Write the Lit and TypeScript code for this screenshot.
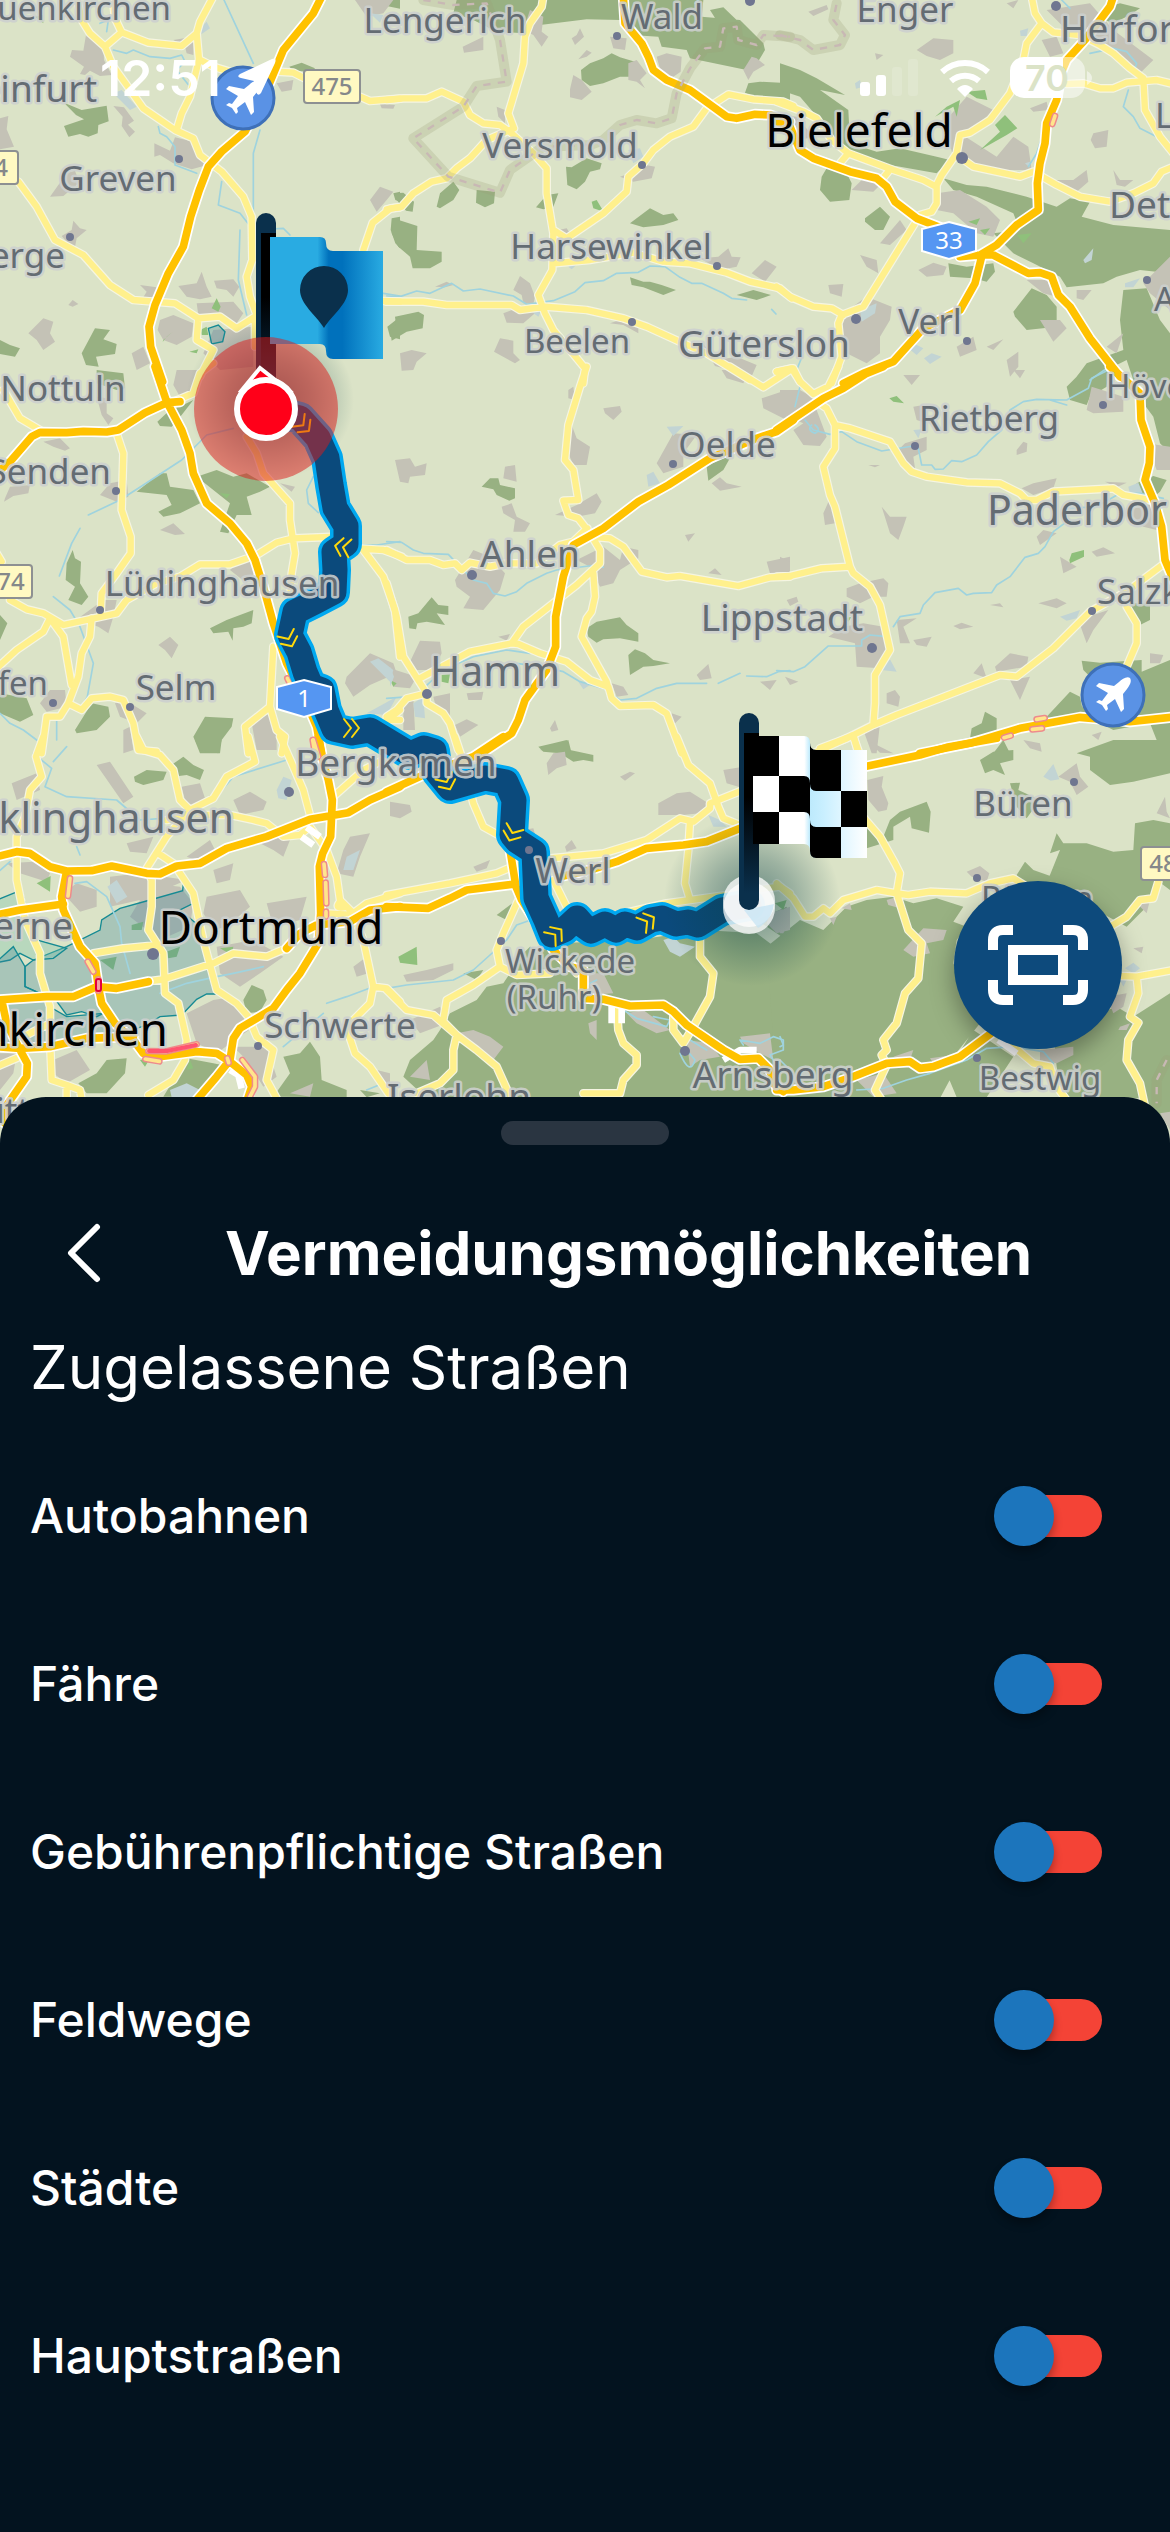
import { LitElement, css, html, svg } from "lit";
import { customElement, property, state } from "lit/decorators.js";

/* ---------- map data ----------
   The map is cut into a 3 x 3 grid of tiles, each 390 x 370 map units.
   Geometry inside a tile is stored at three times that resolution. */

interface Tile {
  x: number;
  y: number;
  wood?: string;
  park?: string;
  town?: string;
  lake?: string;
  river?: string;
  road?: string;
  motorway?: string;
  border?: string;
  jam?: string;
  blank?: string;
}

const TILES: Tile[] = [
  {
    x: 0,
    y: 0,
    wood: "M192 378L252 358L228 345L192 308L245 330L320 317L326 364L295 375L293 400L265 410L240 402L205 410ZM868 200L905 188L945 205L935 215L880 212ZM245 1060L285 985L330 990L310 1018L350 1032L345 1062L288 1070L296 1100L258 1095ZM0 1020L30 1035L60 1045L45 1070L0 1062ZM1140 0H1200V26L1160 18ZM1180 580L1200 575V605L1186 600ZM1175 655L1200 650V745L1186 730L1172 690ZM1162 980L1200 950V1018L1170 1010ZM885 820L900 800L905 830Z",
    park: "M105 50L128 45L130 70ZM635 925L650 895L662 920L655 935ZM600 990L620 980L625 1005L605 1005ZM568 1055L595 1048L590 1060ZM490 1020L518 995L500 1010L488 1026Z",
    town: "M258 105L310 120L312 180L335 225L300 228L270 212L255 225L240 222L252 200L210 170L216 150L250 152ZM340 318L372 322L402 362L384 374L405 395L388 412L365 378L368 350ZM525 412L580 425L600 462L622 495L575 508L520 490L480 465L463 470L463 430L510 452ZM0 355L25 348L20 388L42 440L0 448ZM150 590L200 520L225 512L238 548L190 588ZM185 708L215 690L220 662L240 685L260 690L230 715L225 740L200 725ZM420 855L470 862L470 895L430 892L440 875ZM535 858L590 850L605 815L620 860L635 890L600 898L560 890ZM642 842L700 838L718 860L700 890L680 870L650 865ZM480 960L520 945L580 970L575 1010L530 1035L490 1020L473 990ZM590 910L700 905L730 940L700 985L640 950L595 945ZM395 1060L430 1040L450 1090L410 1110ZM85 1000L130 955L160 965L150 1000L165 1025L130 1050L110 1020ZM205 915L218 900L235 912L218 920ZM1110 600L1140 560L1180 575L1160 600L1130 635ZM1065 0L1180 0L1150 40L1100 50ZM830 250L880 240L875 270L845 275ZM1140 312L1185 315L1180 326L1145 325ZM520 120L580 110L580 165L560 160L555 140ZM640 990L760 980L760 1100L660 1110L610 1060Z",
    lake: "M340 280L365 270L410 320L390 330ZM600 85L620 65L630 85L605 102ZM1110 40L1150 45L1140 68Z",
    river: "M300 70L325 60L320 95M340 150L380 160L400 150L450 170L510 175L545 165L555 185L530 210L570 260M475 380L480 400L500 410L525 440L525 495L590 520M665 545L655 615L720 640L740 665L760 690L850 685L870 705M672 0L760 190M780 390L760 460V640M720 690L715 840L740 945M1150 880L1200 888",
    road: "M230 -10L245 60L270 100L315 140L340 200L380 255L430 325L525 390L580 415L600 465L665 515L730 590L755 650L757 780L740 830L750 890L770 945M315 140L365 97L345 55L340 10M365 97L445 128L545 138L590 100L600 65L640 -10M590 100L597 178L640 200L740 230M597 178L570 290L545 340L530 390M830 215L880 218L920 238M1080 290L1110 303L1200 296M55 545L110 620L165 720L250 765L330 855L400 900L525 910L595 955L660 950L710 985L765 950V1040M595 955L590 1020L640 1050L600 1130M1090 750L1118 668L1172 625L1200 622M1150 903L1200 905",
    motorway: "M965 -10L940 40L850 150L800 270L735 395L665 455L625 500L598 570L572 650L550 740L505 820L465 915L447 980L452 1040L488 1145",
  },
  {
    x: 390,
    y: 0,
    wood: "M200 0H450L455 75L400 100L320 95L250 60L190 40ZM458 0H940L935 50L1050 60L1120 130L1125 150L1095 200L1070 210L900 175L890 150L815 140L805 110L725 105L690 60L590 58L450 75ZM573 210L600 190L640 175L665 160L690 172L735 185L725 230L690 230L640 250L600 258L575 240ZM1075 250L1110 245L1200 250V310L1120 305L1065 278ZM528 500L545 502L590 475L635 490L630 508L600 515L585 545L560 568L532 555ZM720 670L780 625L820 645L850 640L865 660L820 675L760 682ZM10 655L82 678L80 750L155 755L155 785L120 805L68 805L60 770L25 740L5 700ZM140 620L150 580L190 545L208 570L190 600L150 625ZM260 570L315 575L312 610L285 622L258 608ZM12 580L40 578L72 605L68 635L48 632L20 600ZM438 622L470 585L505 580L490 620L460 628ZM720 832L760 845L780 845L815 855L858 870L820 885L760 862L725 855ZM1040 885L1090 870L1143 885L1100 900ZM15 950L85 935L102 945L98 985L50 995L5 1022L0 990L18 975ZM960 30L1000 22L1040 60L1030 80L985 70Z",
    park: "M605 605L620 600L632 620L642 635L610 625Z",
    town: "M420 30L460 50L455 95L475 110L455 140L430 105L400 90ZM218 140L280 110L280 150L222 158ZM545 115L560 105L570 85L582 110L555 135ZM565 178L590 150L605 158L590 170ZM540 268L550 225L575 240L605 275L575 300L540 292ZM715 190L740 180L770 220L750 240L765 265L740 245L715 240ZM800 170L830 160L875 170L872 215L850 230L815 225ZM660 110L710 115L705 150L670 145ZM1060 210L1085 170L1100 175L1125 195L1090 215L1075 240ZM320 320L345 330L345 370L325 350ZM690 530L720 520L740 490L795 500L785 535L730 545ZM505 690L530 685L540 700L515 715ZM930 775L985 770L1015 745L1025 770L1052 772L1040 800L990 810ZM1085 820L1125 780L1160 800L1125 845ZM370 870L390 828L420 850L435 890L430 912L400 910L395 885ZM340 940L380 925L440 935L400 970L350 968ZM312 1055L330 1015L370 1022L370 1060L390 1080L375 1090ZM30 1060L65 1050L110 1060L80 1085L70 1110L35 1112ZM135 860L170 845L190 855L165 862ZM660 970L720 950L745 965L745 1000L700 975ZM930 1020L980 1080L1040 1070L1100 1095L1080 1140L1020 1110L975 1098Z",
    lake: "M715 450L750 445L760 470L730 490ZM535 800L570 785L545 808ZM425 935L455 930L445 950Z",
    river: "M-10 888L30 890L80 873L120 880L185 850L220 873L270 867L370 888L410 913L490 902L555 875L585 848L640 842L680 820L745 817L780 798L825 800L870 832L905 850L935 850L1000 880L1025 895L1070 900M1145 928L1158 942M925 0L915 10",
    border: "M100 0L190 15L290 10L330 120L350 245L260 258L220 320L70 415L175 530L330 578L360 510L460 440L600 435L640 420L690 375L740 360L800 370L845 355L860 280L900 205L945 145L990 140L1000 85L1040 80L1045 120L1100 135L1120 105L1200 110",
    road: "M-10 300L40 295L110 295L155 275L220 305L240 345L280 370L330 375L365 400L430 460L470 505L470 580L490 700L487 810L445 885L465 940L490 990L540 1050L585 1105L580 1150M460 -10L455 20L420 70L405 110L400 190L355 340L372 385L290 420L240 475L200 505L170 535L125 545L70 580L35 620L-10 628M490 690L530 715L640 640L710 575L715 530L760 490L790 450L840 410L910 380L950 325L1015 283L1090 298L1180 305L1210 318M490 790L600 780L730 758L820 785L900 790L1010 818L1080 845L1170 865L1205 895M-10 905L100 905L170 915L365 915L390 930L465 920L590 930L700 955L770 980L880 1030L950 1060L1080 1140",
    motorway: "M700 -10L705 70L755 130L775 170L790 210L830 240L900 270L1010 350L1040 355L1095 343L1140 345L1200 365",
  },
  {
    x: 780,
    y: 0,
    wood: "M0 190L60 210L110 235L195 285L120 270L205 330L210 430L290 455L360 445L470 470L510 480L470 520L360 500L240 480L190 450L120 360L60 290L0 270ZM490 535L560 555L620 560L740 590L830 620L870 595L930 605L905 650L1000 675L1170 690V820L1080 810L1010 830L970 850L860 862L840 830L760 790L700 760L640 700L720 690L700 640L590 590L520 570ZM125 530L140 505L200 520L215 550L208 600L150 605L120 570ZM255 655L300 620L330 650L310 690L285 690L255 665ZM700 935L755 865L800 885L830 920L830 980L740 990L705 950ZM505 790L560 800L640 790L645 815L620 845L580 835L510 830ZM1030 870L1100 865L1140 960L1170 1000V1140H1060L1040 1080L920 1140L890 1130L920 1090L1030 1050L1020 960ZM985 20L1020 10L1080 25L1050 45L1000 70L975 60Z",
    park: "M645 375L675 345L712 385L680 405L600 450L660 395ZM465 350L500 320L540 300L530 350L520 320ZM560 275L615 270L622 300L590 295ZM565 665L600 655L590 675ZM712 705L755 700L730 730ZM600 690L630 685L615 705Z",
    town: "M85 35L140 15L145 28L100 48ZM285 160L310 165L290 180ZM410 150L460 115L520 120L520 160L480 180L440 168ZM680 10L715 0L700 25ZM800 30L930 10L1000 90L1120 180L1080 220L1000 150L900 100L850 80ZM785 120L830 110L850 160L810 170ZM480 380L560 290L640 330L600 370L540 400L650 470L700 410L745 440L755 510L640 510L550 490L520 470L500 400ZM470 580L540 570L620 620L660 660L640 710L590 700L520 640L470 630ZM770 490L800 540L880 540L920 510L925 545L885 580L800 550ZM940 400L985 390L980 440L945 445L932 420ZM1000 510L1020 540L1060 540L1035 560L1010 555ZM240 765L290 780L295 820L260 800ZM415 810L460 788L500 800L490 825L440 830ZM145 855L190 852L185 890L150 880ZM190 940L260 890L335 920L330 960L300 1010L300 1060L260 1090L200 1060L180 990ZM530 1040L580 1010L590 1050L540 1070ZM620 1040L670 1018L640 1050ZM680 1080L715 1055L715 1100L690 1130ZM780 960L840 960L860 985L820 1025ZM215 570L270 515L310 545L280 575ZM300 730L360 660L380 690L330 735ZM740 840L800 840L830 890L790 880ZM890 870L935 870L910 900L890 895ZM1090 850L1170 770V930L1110 880ZM0 345L50 350L100 410L60 420L0 400ZM980 1040L1030 1000L1010 1060ZM750 325L800 305L805 330L760 335Z",
    lake: "M720 92L745 85L740 108L722 108ZM225 250L240 240L245 262L228 266ZM240 930L290 910L285 940L245 965ZM385 1045L400 1030L430 1045L410 1065ZM432 1075L455 1060L485 1070L450 1092ZM1035 850L1080 835L1060 862L1035 862ZM910 780L940 745L935 780L915 790ZM735 490L750 485L748 502Z",
    river: "M845 0L870 25M930 160L1000 145L1040 155L1070 190L1060 220M1045 270L1030 320L1060 350L1080 385L1130 410L1170 460M800 370L770 460L745 500M60 990L70 1060L50 1110M930 1140L980 1105",
    border: "M0 105L60 120L100 150L180 135L195 105L160 60L170 10",
    road: "M-10 305L70 335L110 355L155 420L205 460L340 510L430 540L468 560M205 460L180 490M325 515L305 540M755 -10L765 40L785 70L740 130L730 180L690 280L630 360L570 398L540 405L530 460L485 525L470 555L470 610L455 635L420 645L250 920L185 945L175 970L185 1070L155 1150M785 70L820 97L900 105L960 135L1000 160L1050 205L1090 235L1095 330L1140 410L1180 460M860 252L910 250L960 265L1000 265L1040 248L1130 240L1180 252M545 475L580 500L720 530L760 515L830 555L900 590L990 605L1060 580L1120 550L1145 515L1180 500M-10 860L30 890L100 920L155 925L190 945M-10 1115L35 1105L60 1145",
    motorway: "M-10 365L30 380L60 450L100 475L210 515L290 535L320 560L345 605L410 655L500 690M540 770L600 765L650 735L710 675L775 630L772 550L780 490L795 430L800 370L830 300L845 215L860 180L915 120L990 20L1000 -10M600 765L640 765L745 820L780 818L815 830L835 885L870 920L930 1015L1020 1130M605 770L585 850L540 930L430 985L340 1085L250 1120L190 1150",
    jam: "M825 348L817 372",
  },
  {
    x: 0,
    y: 370,
    wood: "M290 0L370 10L375 55L350 60L290 40ZM410 365L480 310L500 310L510 350L580 360L600 400L540 430L490 440L475 425L515 405L500 375ZM590 320L650 300L700 320L740 310L810 350L780 365L740 380L755 435L710 435L685 490L660 485L690 400ZM472 155L510 120L560 100L580 90L545 135L515 170L480 168ZM200 580L218 540L225 565L243 575L240 640L265 680L245 705L205 690L225 650L197 630ZM0 735L22 760L0 810ZM630 775L680 750L760 720L755 760L730 770L700 775L698 812L685 785L640 790ZM580 1100L615 1040L700 1045L695 1070L665 1110L660 1150H600ZM225 1080L275 1000L325 1010L330 1040L290 1080L230 1090ZM0 970L80 985L100 1035L60 1055L0 1030Z",
    park: "M660 370L690 372L680 385ZM1170 930L1190 940L1180 950Z",
    town: "M530 0L600 0L580 60L540 80L520 45ZM290 80L320 85L320 130L340 145L325 165L305 135ZM130 215L180 205L210 235L195 242L160 230ZM15 385L30 350L90 345L85 370L40 378L12 395ZM300 375L330 340L380 330L385 380L350 395ZM480 480L520 460L555 492L525 495ZM690 600L740 550L770 600L740 640ZM475 825L510 800L535 825L515 865L495 840ZM235 745L310 690L350 690L340 740L325 790L295 770L235 750ZM120 1000L150 960L195 960L200 1010L140 1025ZM345 1000L375 990L440 1030L410 1060L360 1040ZM840 340L885 350L875 365ZM1040 920L1110 850L1180 880L1190 910L1110 945L1060 980L1035 940ZM1190 285H1200V310ZM755 1060L810 1030L830 1090L830 1140H770ZM370 1080L390 1070L400 1140L370 1150Z",
    lake: "M1110 875L1135 865L1180 900L1170 935ZM1100 1030L1190 980L1160 1035Z",
    river: "M265 435L360 390L430 345L545 270L620 195L700 175M240 475L215 520L178 618M160 680L210 720L240 770L280 880L262 980L240 1020M940 320L920 360L925 400L955 428M1080 525L1130 525L1200 515M0 1030L30 1060L70 1080L110 1110M170 1030V1110",
    road: "M350 190L370 250L365 420L392 500L392 550L350 610L305 670L302 730M10 60L60 145L125 183M520 95L580 70L600 10L640 -20M30 690L80 718L130 730L190 765L350 730L380 690L470 640L540 620L600 583L690 583L770 555L830 518L880 505L1010 500M150 745L130 785L50 840L-10 895M150 745L190 800L215 945M-10 550L5 575M275 745L270 800L245 850L235 920L205 1000L180 1040L140 1040L125 1150M205 1000L245 1020L275 985L330 980L370 990L400 1060L415 1140L470 1145M740 200L770 250L790 310L870 400L870 450L885 550L875 610L870 700M820 830L810 1010L735 1070L745 1150M810 1010L830 1080L855 1100L845 1150M1090 540L1150 620L1185 720L1200 860M1075 535L1150 540L1205 560M1150 1060L1200 1020",
    motorway: "M465 -10L500 95L545 180L570 250L580 310L620 400L690 460L740 520L765 570L790 650L820 760L860 880L920 1000L950 1070L965 1150M-10 310L30 275L95 200L120 187L200 188L250 184L320 186L355 180L435 128L500 98L540 95",
    jam: "M862 925L872 945M938 1110L945 1150",
  },
  {
    x: 390,
    y: 370,
    wood: "M275 350L300 325L325 325L330 345L375 355L375 385L358 392L320 375L310 358ZM55 740L85 730L125 682L145 705L175 708L175 735L140 730L165 765L110 755L82 760L78 778L58 775ZM590 775L620 755L690 742L710 765L745 790L745 815L690 805L640 808L620 818L595 800ZM715 855L735 838L765 850L790 870L840 880L790 888L760 890L720 915ZM950 290L1000 262L1018 268L1000 300L955 332ZM450 1140L480 1130L535 1110L545 1150Z",
    park: "M155 915L180 912L175 940L155 935Z",
    town: "M15 270L60 265L75 290L110 280L105 315L60 320L55 340L30 335ZM345 290L375 285L380 335L340 325ZM335 410L365 400L380 440L420 460L405 485L370 485L375 450L340 430ZM640 115L690 108L695 125L670 150L645 130ZM545 165L560 205L600 230L590 285L550 285L535 250ZM535 60L550 50L555 90L535 85ZM800 280L850 190L920 195L880 250L880 290L820 310ZM965 340L990 322L1010 340L1055 350L990 362ZM495 435L560 405L620 370L635 395L615 430L560 440ZM195 630L250 540L300 560L345 610L330 660L280 720L220 715L240 680L200 650ZM560 570L640 530L690 570L700 530L745 540V565L690 600L670 640L630 650L600 590ZM885 495L915 490L895 515ZM1115 85L1190 60V150L1160 135L1120 115ZM1130 575L1200 560V610H1140ZM955 610L975 595L995 615ZM60 875L90 812L150 815L155 850L130 900L80 900ZM0 895L80 920L60 955L10 950ZM920 915L955 882L965 925L930 930ZM1110 935L1160 930L1140 960ZM130 980L180 970L180 1040L140 1020ZM195 1065L230 1048L265 1065L210 1100ZM230 970L280 965L275 990L235 990ZM665 940L700 950L715 975L680 980ZM480 1075L495 1050L505 1080L485 1085ZM995 0L1080 0L1060 40L1010 25ZM325 800L360 792L350 812ZM845 1030L875 1040L850 1065ZM40 1000L70 985L75 1080H40Z",
    lake: "M770 315L790 305L810 340L775 350ZM830 170L880 168L850 198ZM70 1000L100 980L105 1045L75 1040ZM565 935L600 945L580 958ZM0 890L12 920L0 950Z",
    river: "M-10 515L35 517L70 540L100 550L175 553L215 595L250 630L290 640L310 670L345 678L380 665L410 640L470 610L500 600L620 585L640 592M100 955L160 900L250 860L350 840L420 850M380 880L450 890L520 905L570 935L640 955L690 990L740 985L800 955L860 940L950 940M985 940L1050 910M1070 918L1130 920L1165 905L1200 902M-10 985L60 980",
    road: "M-10 540L50 570L120 570L160 585L195 580L215 600L240 578L300 590L350 580L440 580L510 525L550 515L592 475M590 -10L570 50L535 165L525 270L550 300L565 390L520 392L535 435L565 445L600 490L630 540L630 580L560 645L400 770L365 820L240 845L90 925M365 820L385 822L450 850L530 875L600 930L655 950L665 985L690 1008L790 1005L830 1030L875 1150M605 500L660 505L700 530L755 605L830 622L870 618L1045 648L1140 622L1200 620M610 610L615 680L605 725L590 745L575 800L650 935L655 955M1020 -10L1120 52L1200 0M-10 640L20 740L40 860L110 970L110 1000L160 1030L180 1060L205 1140M110 970L50 985L20 1020L-10 1040M-10 1050H30",
    motorway: "M260 1160L365 1090L385 1050L405 990L470 900L497 830L497 740L520 620L550 525L640 475L745 395L835 345L960 265L1100 205L1160 185L1210 150",
  },
  {
    x: 780,
    y: 370,
    wood: "M860 50L910 0L985 0L980 50L930 80L920 105L870 90ZM1090 100L1110 70L1100 0H1170V250L1140 220L1120 140ZM1070 340L1120 318L1160 330L1140 365L1110 390L1070 365ZM905 872L960 878L1085 870L1085 905L1170 870V1110H1130L1110 1060L1000 1080L900 1030L940 930L910 900ZM800 1040L870 965L900 980L910 1030L800 1060ZM570 1105L575 1075L605 1060L615 1025L650 1045L650 1080L600 1100ZM640 1150L670 1110L690 1150ZM1040 700L1110 700L1110 750L1080 765Z",
    park: "M328 85L350 78L372 100L340 95ZM868 570L875 550L912 540L912 560L870 580ZM195 745L215 740L205 755Z",
    town: "M0 60L60 60L95 80L140 200L120 228L70 225L40 180L70 160L0 130ZM370 15L420 15L395 45ZM375 220L440 200L440 240L400 260L405 295L380 280L355 240ZM400 110L430 105L440 160L410 150ZM710 240L730 215L742 220L740 245L710 255ZM920 120L935 50L1030 80L1030 125L940 130ZM725 355L760 340L830 325L820 355L760 375ZM305 410L330 440L380 440L370 470L355 510L330 490ZM130 430L150 385L165 460L135 465ZM770 500L790 480L830 490L780 525ZM935 545L970 532L1005 550L950 560ZM840 560L890 590L850 610ZM0 560L30 575V605H0ZM20 690L50 680L55 695L30 708ZM200 655L240 640L310 625L325 640L320 680L280 680L240 700L200 680ZM145 800L190 770L250 760L310 770L330 820L300 895L230 890L225 820ZM350 750L410 745L370 770L390 820H360ZM400 810L455 800L440 830L410 825ZM520 768L545 758L580 770L540 778ZM630 705L660 700L670 712ZM775 700L830 685L860 700L830 715ZM645 890L690 850L745 860L740 890L650 905ZM690 930L750 920L735 955L720 990ZM580 910L605 880L620 925ZM320 970L345 960L360 980L355 1010L320 1000ZM895 750L985 720L940 780L920 820ZM1110 850L1150 855L1140 880L1110 880ZM15 920L55 935L30 945ZM250 1080L300 1060L290 1150H275ZM935 1095L965 1085L955 1110ZM700 0H735L720 25ZM1100 220L1170 230V300H1130ZM1040 420L1130 400V480L1090 470ZM265 285L300 285L285 292ZM975 335L1040 338L1010 352Z",
    lake: "M1045 350L1075 338L1090 375L1050 372ZM840 740L900 720L890 745L860 752ZM305 900L330 868L350 905ZM400 180L425 178L415 205Z",
    river: "M60 50L45 110M75 150L100 180L150 193L185 185L230 215L305 243L400 228L415 235L425 285L455 285L465 298L490 297L515 272L545 275L590 255L625 215L665 180L690 120L730 95L770 88L860 90L925 55L935 25L985 0M810 90L860 105M95 165Q80 180 105 190Q125 180 105 165M860 455L820 485L795 530L775 550L735 562L690 620L650 645L635 668L580 670L560 675L535 655L465 668L430 705L420 730L360 740L340 770M320 800L270 795L245 810L245 828L145 828L75 890L40 905L-10 902M870 415L950 410L1020 370L1080 370L1150 385",
    road: "M-10 5L40 -5L60 35L100 72L145 50L175 -10M110 95L140 115L165 165L165 235L130 290L150 375L165 410L210 590L220 610L270 650L300 705L330 840L285 915L285 1000L280 1065M165 165L210 175L330 215L370 280L395 305L440 320L560 337L660 340L720 370L740 390L770 390L820 365L1000 355L1030 375L1110 390M-10 620L30 618L125 595L210 590M100 1150L220 1095L280 1065L350 1035L480 985L660 915L710 920L820 835L930 725L1040 665L1160 575M1040 710L1070 760L1070 820L1040 890M220 1095L235 1150",
    motorway: "M420 1150L570 1120L720 1075L900 1042L1050 1055L1190 1040M-10 180L130 85L190 55L260 10L310 -10M990 -10L1080 70L1083 150L1110 230L1108 280L1095 330L1125 400L1145 470L1155 570L1185 640",
    jam: "M672 1103L692 1097M757 1078L786 1075M770 1048L794 1044",
  },
  {
    x: 0,
    y: 740,
    wood: "M402 110L440 90L500 95L490 120L430 135L405 125ZM500 85L550 50L580 75L612 90L600 120L560 105L520 110ZM585 0H665L655 40L600 30ZM235 1030L290 1000L320 960L380 955L375 1000L320 1060L260 1060ZM490 1070L560 955L640 970L690 980L590 1070ZM580 870L640 840L655 855L640 890L590 880ZM730 780L755 735L790 750L800 780L780 815L740 820ZM820 1070L870 1000L850 950L900 940L930 905L960 950L965 1020L1040 1050L1040 1072ZM1080 1050L1140 1060L1100 1072Z",
    park: "M110 430L152 408L150 455ZM395 555L430 545L425 570L395 570ZM500 635L540 620L530 650L505 655ZM660 625L700 620L695 645ZM420 960L450 955L435 980ZM300 660L350 650L340 690ZM570 960L580 985L560 990Z",
    town: "M35 130L110 100L120 150L50 180ZM290 75L330 65L400 170L370 190ZM545 140L600 130L620 190L560 200ZM700 180L750 155L800 185L790 210L720 225ZM20 370L100 365L150 400L140 425L60 400ZM190 460L230 430L290 450L290 500L240 515ZM380 310L460 290L440 340L390 335ZM560 350L630 300L650 340L600 365ZM780 310L830 280L870 300L850 350L820 330ZM640 390L700 370L690 420L650 430ZM620 470L720 450L750 500L680 560L640 570L610 520ZM450 430L540 440L580 490L570 560L480 600L390 530ZM560 820L640 780L700 770L760 860L650 940L590 910ZM650 620L760 600L850 650L780 700L720 740L660 700ZM160 960L230 930L270 990L200 1030L160 1000ZM1030 330L1050 290L1110 280L1080 350L1060 410L1010 400ZM1060 680L1100 650L1105 700L1070 710ZM1130 990L1170 1000V1060L1140 1040ZM870 1060L940 1030L930 1070ZM330 410L420 400L560 420L420 480L330 500ZM0 940H50L40 1000L0 1050ZM800 490L920 470L900 540L820 560ZM700 920L800 920L830 1010L790 1040L740 960Z",
    lake: "M322 440L350 420L382 470L350 490ZM830 150L850 110L875 120L860 180L835 175ZM1040 350L1080 330L1060 390L1030 390ZM510 1050L560 1030L600 1050L580 1072H515Z",
    river: "M100 40L155 85L135 140L200 170L350 180L420 240L560 230L640 180M160 65L200 20M225 430L260 425L320 470L360 560L365 610L390 700M480 760L560 730L650 710L700 700L790 680M230 320L240 345M850 920L970 820M980 790L1040 770L1120 740M-10 400L30 365M80 265L70 220M1100 1050L1150 1030M640 180L700 110L860 60",
    road: "M130 -10L108 50L125 110L90 150L75 230L50 290L50 420L75 540L120 640L120 700L150 800L150 900L155 1020L200 1035L240 1050L245 1080M410 -10L430 30L480 45L520 90L540 180L570 210L640 175L680 110L765 65L745 -10M570 210L500 290L440 385L455 420L455 500L445 570L490 640L495 760L535 790L560 900L555 960L520 1020L445 1065M475 340L520 370L580 460L610 600L650 750L710 790L745 830L770 890L820 930L800 1020L830 1075M280 640L370 625L475 615M440 725L490 718L640 670L700 640L800 650L870 620M500 240L600 225L690 225L760 240L800 250L850 290L900 285L930 260M840 -10L880 80L910 150L930 225M1000 170L1090 90L1150 60M930 260L980 330L1010 410L1020 480L1060 520L1100 490L1200 460M1020 485Q1000 510 1040 500M980 520L1060 525L1090 600L1120 740L1110 790L1050 850L1045 880L1065 940L1110 980L1165 1060M1120 740L1160 745L1200 785M-10 980L60 950L70 890L150 850M200 1035V1070",
    motorway: "M955 -10L968 60L985 120L997 180L992 290L968 340L958 380L962 520L955 610L900 700L860 750L820 805L720 865L700 895L690 960L650 1010L590 1080M-10 350L50 335L90 340L150 380L200 393L275 392L335 378L440 400L480 402L530 378L600 370L680 325L800 290L930 238L1045 218L1110 180L1200 140M-10 525L60 510L190 492M200 393L185 470L190 510L240 620L285 670L295 740L305 790L345 850L400 900L430 940L480 950L590 935L650 940L690 965L740 1005L755 1040L740 1085M-10 780L140 770L220 770L290 740L350 745L445 725M5 780L20 850L60 930L82 970L80 1010L10 1110M-10 920L60 925L150 920L260 895L400 890M860 625L900 580L950 555L1050 545L1110 510L1200 500M15 1120V1150",
    jam: "M210 415L204 468M263 665L280 695M295 718V752M436 957L478 964M727 960L765 1010V1040L750 1070M972 372L975 405M977 428L979 490M978 515V530M940 0L955 50M682 955L686 968M445 933L500 934L590 913",
    blank: "M905 290L940 315M920 262L960 290M690 990L715 1005L725 1045",
  },
  {
    x: 390,
    y: 740,
    wood: "M445 20L490 10L530 0L540 30L610 45L610 65L580 60L550 65L510 40L460 35ZM320 525L380 480L385 510L350 540ZM150 870L130 900L60 960L40 1010L110 1075L600 1072L1180 1075V640L1100 580L940 570L740 600L500 610L530 640L420 620L400 640L340 730L290 740L260 780L180 820ZM220 700L280 690L260 720ZM1100 540L1190 500V600Z",
    park: "M25 650L80 620L82 675L30 668ZM1155 490L1190 480L1180 510Z",
    town: "M470 70L490 40L525 35L530 75L500 85L475 105ZM690 110L720 95L735 100L705 122ZM805 190L860 160L900 155L955 190L930 220L880 225L805 225ZM400 270L430 265L440 300L410 300ZM525 320L545 300L560 325L530 335ZM250 380L300 360L290 385L260 395ZM0 185L60 195L65 215L30 235L0 228ZM40 705L110 690L190 670L190 690L130 720L50 725ZM590 700L640 700L670 760L600 765ZM200 880L250 870L300 890L340 920L310 960L270 940L240 920ZM60 840L150 800L170 850L90 880ZM710 820L760 810L840 870L800 880L740 850ZM890 900L960 910L990 950L930 960L900 980ZM1140 520L1200 500V570L1160 580L1130 550ZM1050 890L1140 880L1150 960L1110 940L1060 910ZM60 1010L110 960L120 1020ZM595 850L620 840L620 900L600 880ZM1000 90L1060 80V145L1010 130Z",
    lake: "M820 600L850 590L870 610L915 620L870 650L840 635ZM955 225L990 240L1010 260H970Z",
    river: "M-10 745L50 735L190 720L250 690L300 645L350 600L380 555L450 530M700 810L740 835L830 860L840 840L790 830M870 940Q900 1010 915 960L890 930M900 900L950 930M1060 915L1050 900L1110 910L1150 890L1180 900V930L1140 945L1170 990M580 740L620 720",
    road: "M-10 465L180 430L320 400L380 375M480 355L640 340L770 300L870 235L910 245L960 205L960 190L1060 150M195 -10L215 50L250 190L280 260L325 285M860 -10L895 75L960 130L985 200L1000 235L1055 257M900 245L895 330L885 430L900 480M700 520L830 490L1010 465M490 420L530 500M385 480L340 580L320 630L330 680L250 735L170 780L160 840M330 680L380 705L480 700M-10 750L50 810L130 825L200 885L190 930L190 990L150 1030L80 1060M160 845L200 885L260 930L320 980L365 1080M930 590L930 650L970 700L960 770L910 860L880 910L850 870L850 830M680 790L685 870L700 910L740 945L740 975L700 1020L690 1060H580M1090 450L1170 440L1200 460M540 660L560 700",
    motorway: "M-10 155L100 105L250 50L340 -10M-10 500L115 505L180 475L230 450L375 432M360 330L378 440L395 480L490 630L540 680L580 690V775L640 778L720 798L820 795L850 815L890 855L1000 930L1050 958L1105 955L1140 990L1150 1030L1180 1055M510 410L600 390L680 365L770 325L880 315L950 305L1050 265",
    blank: "M665 785V850M695 790V850M1000 960L1050 930L1100 930",
  },
  {
    x: 780,
    y: 740,
    wood: "M-40 620L60 540L130 570L200 500L260 480L340 470L400 490L470 475L550 500L520 545L560 560L530 600L520 670L360 710L330 650L335 595L390 560L430 590L520 1000L480 1075H-60L-20 900ZM355 690L430 690L520 670L600 850L520 950L480 930L420 960L330 950L320 860ZM330 240L360 215L440 185L452 215L447 278L395 265L390 230L340 260L340 300L260 325V260L310 290ZM600 60L640 35L700 30L700 60L660 70L675 105L640 90L615 100ZM690 130L720 128L715 150L780 180L740 235L710 200ZM890 40L1000 0H1170V100L1060 125L990 135L930 90L930 50ZM710 405L735 365L760 390L830 415L800 445L730 430ZM810 340L830 280L850 310L920 310L1000 335L1060 330L1065 250L1120 240L1170 250V450L1130 420L1100 500L1040 560L800 430L840 330ZM580 870L700 950L620 1072H530L500 1000ZM820 870L1010 800L1060 830L1170 760V1150L1080 1075L850 1072L830 980Z",
    town: "M262 120L310 108L305 140L325 190L320 210L295 215L265 180ZM560 395L600 378L628 400L620 425L575 410ZM835 110L890 70L900 110L925 140L890 165L870 125ZM370 630L430 565L500 570L490 600L440 610L450 640L400 650ZM320 480L370 465L360 505L325 495ZM185 505L210 490L215 510ZM1130 220L1155 170L1160 215L1170 235ZM1070 490L1110 480L1100 520ZM980 770L1040 760L1030 800L1000 820ZM1020 860L1050 850L1040 870L1015 870ZM780 930L880 920L880 945L830 970L780 960ZM230 1020L310 1000L350 1060L280 1070ZM340 950L400 930L390 960ZM1140 1120L1170 1115V1170ZM0 530L30 540L10 580H0ZM730 0L780 10L785 35L750 25ZM260 0L340 40L300 38ZM150 535L170 530L160 555ZM450 955L560 940L540 970L470 985ZM1060 625L1090 620L1085 640Z",
    lake: "M790 110L820 72L838 118L812 122ZM1035 685L1060 668L1080 685L1060 700ZM1020 720L1040 720L1030 740Z",
    river: "M0 960L30 990M230 1050L310 1045L380 1020L450 1000L560 960L620 925L700 920L790 935L820 970M0 890L10 915L0 920",
    border: "M1160 960L1130 1020L1130 1090",
    road: "M-10 430L40 475L75 530L100 530L130 505L150 520L190 480L290 450L350 460L385 465L450 455L560 460L630 430L700 415L740 440M240 220L300 290L345 370L360 400L350 460L385 570L425 610L415 715L375 760L350 850L310 900L320 930L305 945L320 975L285 1050L305 1080M1135 425L1120 475L1080 480L1040 530L990 560M1020 708L1070 710L1180 690M1070 710L1075 760L1050 830L1075 848L1045 900L1040 960L1080 1030L1095 1100M690 910L760 970L810 980L830 1040L860 1080M120 25L200 -5M220 -10L238 40",
    motorway: "M-10 1050L40 1050L130 1040L220 1010L320 970L390 965L420 985L460 980L540 950L660 860L760 780M230 85L420 45L500 22L650 -5",
    blank: "M655 900L710 940",
  },
];

interface Label {
  text: string;
  x: number;
  y: number;
  size: number;
  anchor?: "start" | "middle" | "end";
  city?: boolean;
}

const LABELS: Label[] = [
  { text: "euenkirchen", x: 171, y: 20, size: 33, anchor: "end" },
  { text: "Lengerich", x: 445, y: 33, size: 35 },
  { text: "Wald", x: 662, y: 29, size: 35 },
  { text: "Enger", x: 905, y: 22, size: 35 },
  { text: "Herfor", x: 1060, y: 42, size: 37, anchor: "start" },
  { text: "einfurt", x: 97, y: 102, size: 37, anchor: "end" },
  { text: "L", x: 1155, y: 128, size: 35, anchor: "start" },
  { text: "Versmold", x: 560, y: 158, size: 35 },
  { text: "Greven", x: 118, y: 191, size: 35 },
  { text: "Det", x: 1109, y: 218, size: 37, anchor: "start" },
  { text: "Harsewinkel", x: 611, y: 259, size: 35 },
  { text: "erge", x: 65, y: 268, size: 35, anchor: "end" },
  { text: "A", x: 1154, y: 311, size: 33, anchor: "start" },
  { text: "Beelen", x: 577, y: 353, size: 33 },
  { text: "Gütersloh", x: 764, y: 357, size: 37 },
  { text: "Verl", x: 930, y: 334, size: 35 },
  { text: "Nottuln", x: 63, y: 401, size: 35 },
  { text: "Höve", x: 1106, y: 398, size: 33, anchor: "start" },
  { text: "Rietberg", x: 989, y: 431, size: 35 },
  { text: "Oelde", x: 727, y: 457, size: 35 },
  { text: "Senden", x: 111, y: 484, size: 35, anchor: "end" },
  { text: "Paderbor", x: 987, y: 525, size: 41, anchor: "start" },
  { text: "Ahlen", x: 530, y: 567, size: 37 },
  { text: "Lüdinghausen", x: 222, y: 596, size: 35 },
  { text: "Salzk", x: 1097, y: 604, size: 35, anchor: "start" },
  { text: "Lippstadt", x: 782, y: 631, size: 37 },
  { text: "Hamm", x: 495, y: 686, size: 41 },
  { text: "fen", x: 48, y: 695, size: 33, anchor: "end" },
  { text: "Selm", x: 176, y: 700, size: 35 },
  { text: "Bergkamen", x: 396, y: 776, size: 37 },
  { text: "Büren", x: 1023, y: 816, size: 35 },
  { text: "klinghausen", x: 234, y: 833, size: 41, anchor: "end" },
  { text: "Werl", x: 573, y: 883, size: 35 },
  { text: "Rüthen", x: 1037, y: 910, size: 33 },
  { text: "erne", x: 73, y: 939, size: 37, anchor: "end" },
  { text: "Wickede", x: 570, y: 973, size: 33 },
  { text: "(Ruhr)", x: 554, y: 1009, size: 33 },
  { text: "Schwerte", x: 340, y: 1038, size: 35 },
  { text: "Arnsberg", x: 773, y: 1088, size: 37 },
  { text: "Bestwig", x: 1040, y: 1090, size: 33 },
  { text: "Iserlohn", x: 459, y: 1110, size: 37 },
  { text: "itt", x: 30, y: 1123, size: 35, anchor: "end" },
  { text: "Bielefeld", x: 859, y: 147, size: 46, city: true },
  { text: "Dortmund", x: 271, y: 944, size: 46, city: true },
  { text: "nkirchen", x: 168, y: 1046, size: 46, anchor: "end", city: true },
];

/* x, y, radius */
const DOTS: number[][] = [
  [179, 159, 4], [70, 237, 4], [617, 36, 4], [642, 165, 4], [717, 266, 4], [632, 322, 4],
  [962, 158, 6], [856, 319, 5], [967, 341, 4], [1056, 6, 5], [1147, 280, 4], [750, 1, 5],
  [116, 491, 4], [100, 610, 4], [53, 703, 4], [130, 707, 4], [289, 792, 5], [673, 464, 4],
  [472, 575, 5], [427, 694, 5], [915, 446, 4], [1103, 405, 4], [1092, 611, 4], [872, 648, 5],
  [153, 954, 6], [258, 1046, 4], [1074, 782, 4], [977, 878, 4], [977, 1058, 4], [529, 850, 4],
  [501, 941, 4], [685, 1051, 5],
];

/* x, y, heading in degrees */
const ARROWS: number[][] = [
  [304, 426, 45], [342, 547, 190], [289, 640, 65], [352, 728, 0],
  [447, 783, 65], [512, 834, 112], [556, 934, -40], [648, 921, -32],
];

const ROUTE =
  "M265 409L300 418L318 438L327 458L331 485L335 508L346 526L346 544L334 552L335 570L334 592L315 602L295 612L290 635L299 652L305 672L311 686L322 690L326 710L334 729L352 733L370 730L390 742L410 754L424 748L434 751L437 772L450 788L485 778L506 782L514 800L512 835L517 841L534 852L536 898L546 920L552 935L564 930L577 918L584 926L591 931L605 924L616 930L625 924L637 928L651 920L662 918L676 924L688 922L698 925L722 910L749 905";

const at = (t: Tile) => `translate(${t.x} ${t.y}) scale(0.33333)`;

const layer = (key: keyof Tile, cls: string) =>
  TILES.filter((t) => t[key]).map(
    (t) => svg`<path class=${cls} transform=${at(t)} d=${String(t[key])}></path>`,
  );

const plane = (x: number, y: number) => svg`
  <g transform="translate(${x} ${y})">
    <circle r="31" fill="#5a92e5" stroke="#3e70b8" stroke-width="3"></circle>
    <path fill="#fff" d="M17 -17C14 -19 9 -16 6 -13L1 -9L-14 -12L-17 -9L-5 -2L-11 6L-14 5L-17 7L-11 10L-7 16L-5 14L-6 10L2 4L8 17L11 14L10 -1L14 -6C17 -10 19 -14 17 -17Z"></path>
  </g>`;

const shield = (x: number, y: number, width: number, text: string, textX: number) => svg`
  <g>
    <rect x=${x} y=${y} width=${width} height="33" rx="3" fill="#fff9c2" stroke="#8d9092" stroke-width="2"></rect>
    <text class="shield-text" x=${textX} y=${y + 25} text-anchor="middle">${text}</text>
  </g>`;

const hexagon = (x: number, y: number, text: string) => svg`
  <g transform="translate(${x} ${y})">
    <path d="M0 -18L27 -11V11L0 19L-27 11V-11Z" fill="#5596f2" stroke="#fff" stroke-width="2"></path>
    <text class="hexagon-text" y="9" text-anchor="middle">${text}</text>
  </g>`;

@customElement("route-map")
export class RouteMap extends LitElement {
  static styles = css`
    :host {
      display: block;
    }
    .map {
      display: block;
      width: 100%;
      height: auto;
      background: #dbe3c7;
      font-family: "Noto Sans", "Open Sans", sans-serif;
    }
    .wood {
      fill: #98b182;
    }
    .park {
      fill: #8fc07b;
    }
    .town {
      fill: #c4c2b6;
    }
    .lake {
      fill: #c2d4d4;
    }
    .line {
      fill: none;
      stroke-linejoin: round;
      stroke-linecap: round;
    }
    .river {
      stroke: #9fd3de;
      stroke-width: 5px;
    }
    .road-edge {
      stroke: #f5f5e2;
      stroke-width: 26px;
    }
    .road {
      stroke: #fff08c;
      stroke-width: 19px;
    }
    .motorway-edge {
      stroke: #fff;
      stroke-width: 33px;
    }
    .motorway {
      stroke: #ffc200;
      stroke-width: 23px;
    }
    .border-edge {
      stroke: #9da078;
      stroke-opacity: 0.25;
      stroke-width: 30px;
    }
    .border {
      stroke: #c8b8b4;
      stroke-width: 7px;
      stroke-dasharray: 22 22;
      stroke-linecap: butt;
    }
    .jam-edge {
      stroke: #ee8a8c;
      stroke-width: 20px;
    }
    .jam {
      stroke: #ffe58c;
      stroke-width: 11px;
    }
    .blank {
      stroke: #fff;
      stroke-width: 20px;
      stroke-linecap: butt;
    }
    .zone {
      fill: #3f8797;
      fill-opacity: 0.32;
      stroke: #158a93;
      stroke-width: 4px;
    }
    .zone-green {
      fill: #6fc0a8;
    }
    .label {
      fill: #646c73;
      stroke: #cdd0cf;
      stroke-opacity: 0.9;
      stroke-width: 5px;
      stroke-linejoin: round;
      paint-order: stroke;
    }
    .label-city {
      fill: #000;
    }
    .shield-text {
      fill: #85888a;
      font-size: 24px;
      font-weight: 500;
    }
    .hexagon-text {
      fill: #fff;
      font-size: 24px;
    }
  `;

  render() {
    return html`
      <svg class="map" viewBox="0 0 1170 1144" role="img" aria-label="Routenkarte">
        <defs>
          <linearGradient id="cloth" x1="0" x2="1">
            <stop offset="0" stop-color="#29abe2"></stop>
            <stop offset="0.42" stop-color="#29abe2"></stop>
            <stop offset="0.52" stop-color="#0071bc"></stop>
            <stop offset="0.64" stop-color="#0071bc"></stop>
            <stop offset="1" stop-color="#29abe2"></stop>
          </linearGradient>
          <linearGradient id="check" x1="0" x2="1">
            <stop offset="0" stop-color="#fff"></stop>
            <stop offset="0.45" stop-color="#fff"></stop>
            <stop offset="0.5" stop-color="#bdeafc"></stop>
            <stop offset="0.62" stop-color="#c9efff"></stop>
            <stop offset="1" stop-color="#fff"></stop>
          </linearGradient>
          <linearGradient id="pole" x1="0" x2="0" y1="0" y2="1">
            <stop offset="0" stop-color="#000"></stop>
            <stop offset="0.4" stop-color="#000"></stop>
            <stop offset="1" stop-color="#0a304c"></stop>
          </linearGradient>
          <radialGradient id="glow">
            <stop offset="0" stop-color="#0a4048" stop-opacity="0.55"></stop>
            <stop offset="0.5" stop-color="#0a4048" stop-opacity="0.3"></stop>
            <stop offset="1" stop-color="#0a4048" stop-opacity="0"></stop>
          </radialGradient>
        </defs>

        ${layer("wood", "wood")} ${layer("town", "town")} ${layer("park", "park")}
        ${layer("lake", "lake")}
        <g transform="translate(0 740) scale(0.33333)">
          <path
            class="zone"
            d="M550 430L580 460V490L540 510L600 560L625 640V690L650 740L645 762L620 762L590 778L545 825L480 830L440 855L370 880L310 820L290 830L245 815L200 825L160 770L120 760L75 740V680L100 660L200 620L300 570L305 540L360 505L450 480L548 452Z"
          ></path>
          <path class="zone zone-green" d="M-10 480L65 450L75 490V560L110 600L200 625L160 655L100 660L60 640L30 660L-10 668Z"></path>
          <path class="zone" d="M-10 665L40 620L75 680V740L120 760L140 795L200 830L310 820L360 880L200 920L-10 915Z"></path>
        </g>
        <path class="zone" transform="scale(0.33333)" d="M625 985L655 975L675 995L668 1025L635 1032Z"></path>
        ${layer("river", "line river")} ${layer("road", "line road-edge")}
        ${layer("road", "line road")} ${layer("blank", "line blank")}
        ${layer("motorway", "line motorway-edge")} ${layer("motorway", "line motorway")}
        ${layer("border", "line border-edge")} ${layer("border", "line border")}
        ${layer("jam", "line jam-edge")} ${layer("jam", "line jam")}
        <path class="line" d="M149 1051L167 1051L196 1045" stroke="#ff5470" stroke-width="4"></path>
        <rect x="96" y="979" width="5" height="12" rx="2" fill="#f5a0a0" stroke="#e4003c" stroke-width="2"></rect>

        <ellipse cx="270" cy="400" rx="84" ry="80" fill="url(#glow)"></ellipse>
        <path class="line" d=${ROUTE} stroke="#00a8f0" stroke-width="32"></path>
        <path class="line" d=${ROUTE} stroke="#0b4a7c" stroke-width="25"></path>
        ${ARROWS.map(
          ([x, y, turn]) => svg`
            <path class="line" transform="translate(${x} ${y}) rotate(${turn})" stroke="#ffd90a" stroke-width="2"
              d="M-8 -9L-1 0L-8 9M0 -9L7 0L0 9"></path>`,
        )}
        ${DOTS.map(([x, y, r]) => svg`<circle cx=${x} cy=${y} r=${r} fill="#6f7690"></circle>`)}
        ${shield(304, 70, 56, "475", 332)} ${shield(-20, 151, 38, "4", 1)}
        ${shield(-30, 565, 62, "74", 11)} ${shield(1141, 847, 60, "48", 1163)}
        ${hexagon(949, 240, "33")} ${hexagon(304, 698, "1")} ${plane(243, 98)}
        ${plane(1113, 695)}
        ${LABELS.map(
          (l) => svg`
            <text class="label ${l.city ? "label-city" : ""}" x=${l.x} y=${l.y} font-size=${l.size}
              text-anchor=${l.anchor ?? "middle"}>${l.text}</text>`,
        )}

        <g>
          <rect x="256" y="213" width="20" height="190" rx="10" fill="#0a304c"></rect>
          <rect x="261" y="233" width="15" height="160" fill="url(#pole)"></rect>
          <path
            d="M270 237H320Q326 237 326 243Q326 251 333 251H383V359H333Q326 359 326 351Q326 344 320 344H270Z"
            fill="url(#cloth)"
          ></path>
          <path d="M324 328C316 315 300 304 300 290A24 24 0 0 1 348 290C348 304 332 315 324 328Z" fill="#0a304c"></path>
          <circle cx="266" cy="409" r="72" fill="#de1a1a" fill-opacity="0.5"></circle>
          <path d="M260 368L242 390H288Z" fill="#ff0019" stroke="#fff" stroke-width="4"></path>
          <circle cx="266" cy="409" r="29" fill="#ff0019" stroke="#fff" stroke-width="6"></circle>
        </g>

        <g>
          <ellipse cx="752" cy="900" rx="88" ry="86" fill="url(#glow)"></ellipse>
          <circle cx="749" cy="901" r="26" fill="#fff" fill-opacity="0.75"></circle>
          <circle cx="749" cy="908" r="26" fill="#fff" fill-opacity="0.75"></circle>
          <path d="M744 910L758 928Q772 920 774 904Z" fill="#c3e2f3" fill-opacity="0.7"></path>
          <rect x="739" y="713" width="20" height="197" rx="10" fill="#0a304c"></rect>
          <rect x="744" y="733" width="15" height="160" fill="url(#pole)"></rect>
          <path d="M753 736H804Q810 736 810 743Q810 750 816 750H867V858H816Q810 858 810 851Q810 844 804 844H753Z" fill="url(#check)"></path>
          <path
            d="M753 736H779V776H753ZM779 776H804Q810 776 810 783V819Q810 812 804 812H779ZM753 812H779V844H753ZM810 743Q810 750 816 750H841V791H816Q810 791 810 784ZM841 791H867V827H841ZM810 820Q810 827 816 827H841V858H816Q810 858 810 851Z"
            fill="#000"
          ></path>
        </g>
      </svg>
    `;
  }
}

@customElement("status-bar")
export class StatusBar extends LitElement {
  static styles = css`
    :host {
      display: flex;
      justify-content: space-between;
      align-items: center;
      height: 60px;
      padding: 48px 76px 0 100px;
      color: #fff;
      font-family: Inter, "Liberation Sans", sans-serif;
      font-weight: 600;
    }
    .clock,
    .icons {
      display: flex;
      align-items: center;
    }
    .clock {
      gap: 16px;
      font-size: 50px;
      line-height: 60px;
    }
    .icons {
      gap: 20px;
    }
    .battery-text {
      fill: #dbe3c7;
      font-size: 36px;
    }
  `;

  render() {
    return html`
      <div class="clock">
        <time>12:51</time>
        <svg width="40" height="40" viewBox="0 0 40 40" aria-hidden="true">
          <path d="M35 1Q40 -1 38 5L24 35Q21 39 19 34L17 23L4 20Q-1 19 3 16Z" fill="#fff"></path>
        </svg>
      </div>
      <div class="icons">
        <svg width="60" height="40" viewBox="0 0 60 40" fill="#fff" aria-hidden="true">
          <rect x="0" y="24" width="10" height="14" rx="3"></rect>
          <rect x="16" y="17" width="10" height="21" rx="3"></rect>
          <g fill-opacity="0.15">
            <rect x="32" y="9" width="10" height="29" rx="3"></rect>
            <rect x="48" y="1" width="10" height="37" rx="3"></rect>
          </g>
        </svg>
        <svg width="50" height="40" viewBox="0 0 50 40" aria-hidden="true">
          <g fill="none" stroke="#fff" stroke-width="6">
            <path d="M2 14A34 34 0 0 1 48 14"></path>
            <path d="M11 23A21 21 0 0 1 39 23"></path>
          </g>
          <path d="M25 39L17 31Q25 23 33 31Z" fill="#fff"></path>
        </svg>
        <svg width="84" height="42" viewBox="0 0 84 42" aria-label="Akku 70 Prozent">
          <path d="M14 0H53V41H14A14 14 0 0 1 0 27V14A14 14 0 0 1 14 0Z" fill="#fff"></path>
          <path d="M53 0H61A14 14 0 0 1 75 14V27A14 14 0 0 1 61 41H53Z" fill="#fff" fill-opacity="0.5"></path>
          <path d="M77 14Q82 17 82 21Q82 25 77 28Z" fill="#fff" fill-opacity="0.5"></path>
          <text class="battery-text" x="37" y="34" text-anchor="middle">70</text>
        </svg>
      </div>
    `;
  }
}

@customElement("road-switch")
export class RoadSwitch extends LitElement {
  @property() label = "";
  @property({ type: Boolean }) checked = false;

  static styles = css`
    :host {
      display: flex;
      align-items: center;
      justify-content: space-between;
      min-height: 168px;
      padding: 0 68px 0 30px;
    }
    .name {
      flex: 1;
      font-size: 48px;
      font-weight: 500;
      line-height: 60px;
    }
    .switch {
      appearance: none;
      display: grid;
      align-items: center;
      width: 108px;
      height: 60px;
      margin: 0;
      cursor: pointer;
    }
    .switch::before,
    .switch::after {
      content: "";
      grid-area: 1 / 1;
    }
    .switch::before {
      height: 42px;
      margin-left: 9px;
      border-radius: 21px;
      background: #f44336;
    }
    .switch::after {
      width: 60px;
      height: 60px;
      border-radius: 50%;
      background: #1c75bc;
      box-shadow: 0 6px 9px rgba(0, 0, 0, 0.3);
    }
    .switch:checked::before {
      margin: 0 9px 0 0;
      background: #4caf50;
    }
    .switch:checked::after {
      justify-self: end;
    }
  `;

  render() {
    return html`
      <label class="name" for="switch">${this.label}</label>
      <input
        class="switch"
        id="switch"
        type="checkbox"
        role="switch"
        .checked=${this.checked}
        @change=${(e: Event) => (this.checked = (e.target as HTMLInputElement).checked)}
      />
    `;
  }
}

@customElement("app-root")
export class AppRoot extends LitElement {
  @state() private roads = [
    "Autobahnen",
    "Fähre",
    "Gebührenpflichtige Straßen",
    "Feldwege",
    "Städte",
    "Hauptstraßen",
  ];

  static styles = css`
    :host {
      display: flex;
      flex-direction: column;
      min-height: 100vh;
      background: #03131f;
      color: #fff;
      font-family: Inter, "Liberation Sans", sans-serif;
    }
    .stage {
      position: relative;
    }
    .status {
      position: absolute;
      inset: 0 0 auto 0;
    }
    .fit {
      position: absolute;
      right: 48px;
      bottom: 95px;
      display: grid;
      place-items: center;
      width: 168px;
      height: 168px;
      padding: 0;
      border: 0;
      border-radius: 50%;
      background: #0d4a7c;
      box-shadow: 0 10px 24px rgba(0, 0, 0, 0.35);
    }
    .sheet {
      position: relative;
      flex: 1;
      margin-top: -47px;
      padding-top: 24px;
      border-radius: 46px 46px 0 0;
      background: #03131f;
    }
    .handle {
      width: 168px;
      height: 24px;
      margin: 0 auto 64px;
      border-radius: 12px;
      background: #2a3541;
    }
    .header {
      display: flex;
      align-items: center;
      height: 88px;
      padding-right: 81px;
    }
    .back {
      display: grid;
      place-items: center;
      width: 168px;
      height: 88px;
      padding: 0;
      border: 0;
      background: none;
    }
    .title {
      flex: 1;
      margin: 0;
      font-size: 60px;
      font-weight: 700;
      line-height: 72px;
      text-align: center;
      white-space: nowrap;
    }
    .subtitle {
      margin: 34px 30px 29px;
      font-size: 60px;
      font-weight: 400;
      line-height: 72px;
    }
  `;

  render() {
    return html`
      <div class="stage">
        <route-map></route-map>
        <status-bar class="status"></status-bar>
        <button class="fit" type="button" aria-label="Route einpassen">
          <svg width="100" height="80" viewBox="0 0 100 80" fill="none" stroke="#fff" stroke-width="10">
            <path d="M5 25V15Q5 5 15 5H25M75 5H85Q95 5 95 15V25M95 55V65Q95 75 85 75H75M25 75H15Q5 75 5 65V55"></path>
            <rect x="25" y="25" width="50" height="30"></rect>
          </svg>
        </button>
      </div>
      <main class="sheet">
        <div class="handle"></div>
        <header class="header">
          <button class="back" type="button" aria-label="Zurück">
            <svg width="36" height="60" viewBox="0 0 36 60" fill="none" stroke="#fff" stroke-width="6" stroke-linecap="round" stroke-linejoin="round">
              <path d="M31 4L5 30L31 56"></path>
            </svg>
          </button>
          <h1 class="title">Vermeidungsmöglichkeiten</h1>
        </header>
        <h2 class="subtitle">Zugelassene Straßen</h2>
        ${this.roads.map((road) => html`<road-switch .label=${road}></road-switch>`)}
      </main>
    `;
  }
}
